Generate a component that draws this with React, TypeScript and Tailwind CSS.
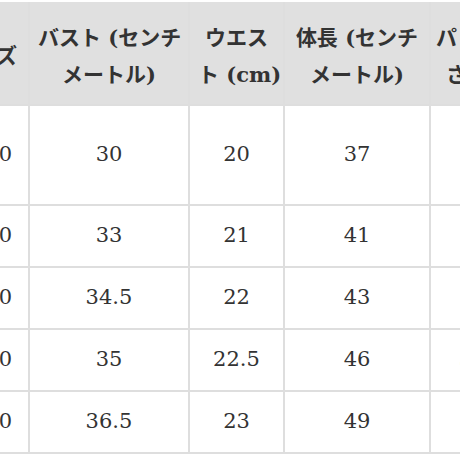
const rows = [
  { size: "80", bust: "30", waist: "20", length: "37", pants: "28", tall: true },
  { size: "90", bust: "33", waist: "21", length: "41", pants: "31" },
  { size: "100", bust: "34.5", waist: "22", length: "43", pants: "34" },
  { size: "110", bust: "35", waist: "22.5", length: "46", pants: "36.5" },
  { size: "120", bust: "36.5", waist: "23", length: "49", pants: "40" },
];

const th = "border-2 border-[#dedede] bg-[#e0e0e0] px-2 pt-[5px] text-center align-middle font-bold leading-[37px] whitespace-nowrap";
const td = "border-2 border-[#dedede] px-2 text-center align-middle";

export default function App() {
  return (
    <div className="h-[460px] w-[460px] overflow-hidden bg-white pt-[2px] font-['DejaVu_Serif','Noto_Sans_CJK_JP',serif] text-[#333]">
      <table className="ml-[-62px] w-[596px] table-fixed border-collapse">
        <colgroup>
          <col className="w-[90px]" />
          <col className="w-[160px]" />
          <col className="w-[95px]" />
          <col className="w-[146px]" />
          <col className="w-[105px]" />
        </colgroup>
        <thead>
          <tr className="h-[103px] text-[21px]">
            <th className={th + " border-t-0 !text-right !pr-[11px]"}>サイズ</th>
            <th className={th + " border-t-0"}>
              バスト (センチ
              <br />
              メートル)
            </th>
            <th className={th + " border-t-0"}>
              ウエス
              <br />ト (cm)
            </th>
            <th className={th + " border-t-0"}>
              体長 (センチ
              <br />
              メートル)
            </th>
            <th className={th + " border-t-0 !text-left !pl-[5px]"}>
              パンツの長
              <br />
              <span className="pl-[10px]">さ (cm)</span>
            </th>
          </tr>
        </thead>
        <tbody className="text-[21px]">
          {rows.map((r) => (
            <tr key={r.size} className={r.tall ? "h-[100px]" : "h-[62px]"}>
              <td className={td + " !text-right !pr-[16px]"}>{r.size}</td>
              <td className={td}>{r.bust}</td>
              <td className={td}>{r.waist}</td>
              <td className={td}>{r.length}</td>
              <td className={td}>{r.pants}</td>
            </tr>
          ))}
        </tbody>
      </table>
    </div>
  );
}
